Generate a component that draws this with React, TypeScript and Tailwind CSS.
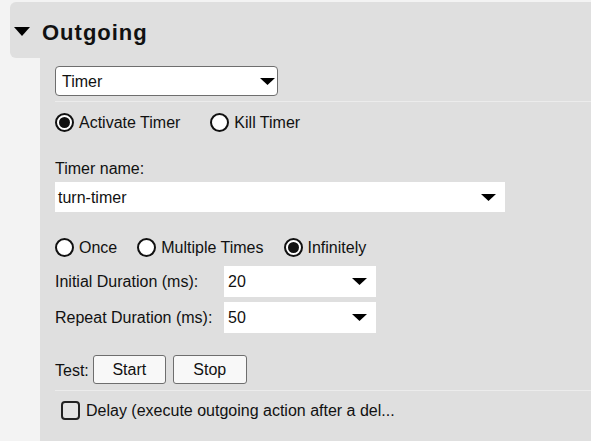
import React from 'react';

const font = { fontFamily: '"Liberation Sans", Arial, sans-serif' };

function Caret({ className = '' }: { className?: string }) {
  return (
    <svg width="15" height="7" viewBox="0 0 15 7" className={className}>
      <polygon points="0,0 15,0 7.5,7" fill="#000" />
    </svg>
  );
}

function Radio({ checked, label }: { checked?: boolean; label: string }) {
  return (
    <label className="flex items-center gap-[5px]">
      <span className="flex h-[19px] w-[19px] items-center justify-center rounded-full border-[2px] border-[#111] bg-white">
        {checked && <span className="h-[11px] w-[11px] rounded-full bg-[#111]" />}
      </span>
      <span className="pt-px">{label}</span>
    </label>
  );
}

function Dropdown({ value, width }: { value: string; width: string }) {
  return (
    <div className={`flex h-[31px] items-center justify-between bg-white pl-[4px] pr-[9px] ${width}`}>
      <span className="pt-px">{value}</span>
      <Caret />
    </div>
  );
}

export default function App() {
  return (
    <div style={font} className="flex min-h-screen flex-col bg-[#f3f3f3] pt-[2px] text-[16px] leading-[18px] text-[#111]">
      {/* Section header */}
      <div className="ml-[10px] flex h-[56px] items-center rounded-l-[6px] bg-[#dfdfdf] pl-[4px] pt-[5px]">
        <svg width="16" height="9" viewBox="0 0 16 9" className="mb-[3px]">
          <polygon points="0,0 16,0 8,9" fill="#000" />
        </svg>
        <span className="ml-[12px] text-[22px] font-bold leading-[25px] tracking-[1px]">Outgoing</span>
      </div>

      {/* Section body */}
      <div className="ml-[40px] flex flex-1 flex-col bg-[#dfdfdf] pl-[15px] pt-[8px]">
        <div className="flex h-[30px] w-[223px] items-center justify-between rounded-[4px] border border-[#6e6e6e] bg-white pl-[6px] pr-[2px]">
          <span className="pt-px">Timer</span>
          <Caret />
        </div>
        <div className="mt-[5px] h-px bg-[#ececec]" />

        <div className="mt-[10px] flex h-[20px] items-center gap-[30px]">
          <Radio checked label="Activate Timer" />
          <Radio label="Kill Timer" />
        </div>

        <div className="mt-[28px]">Timer name:</div>
        <div className="mt-[4px] flex h-[30px] w-[450px] items-center justify-between bg-white pl-[3px] pr-[9px]">
          <span className="pt-px">turn-timer</span>
          <Caret />
        </div>

        <div className="mt-[25px] flex h-[20px] items-center gap-[20px]">
          <Radio label="Once" />
          <Radio label="Multiple Times" />
          <Radio checked label="Infinitely" />
        </div>

        <div className="mt-[9px] grid grid-cols-[169px_152px] items-center gap-y-[5px]">
          <span className="pt-px">Initial Duration (ms):</span>
          <Dropdown value="20" width="w-[152px]" />
          <span className="pt-px">Repeat Duration (ms):</span>
          <Dropdown value="50" width="w-[152px]" />
        </div>

        <div className="mt-[22px] flex items-center gap-[7px]">
          <span className="mr-[-3px] pt-[2px]">Test:</span>
          <button className="h-[29px] w-[73px] rounded-[3px] border border-[#6e6e6e] bg-[#f8f8f8]">Start</button>
          <button className="h-[29px] w-[74px] rounded-[3px] border border-[#6e6e6e] bg-[#f8f8f8]">Stop</button>
        </div>
        <div className="mt-[6px] h-px bg-[#ececec]" />

        <label className="ml-[6px] mt-[10px] flex items-center gap-[6px]">
          <span className="h-[19px] w-[19px] rounded-[4px] border-[2px] border-[#222] bg-[#e4e4e4]" />
          <span className="pt-px">Delay (execute outgoing action after a del...</span>
        </label>
      </div>
    </div>
  );
}
